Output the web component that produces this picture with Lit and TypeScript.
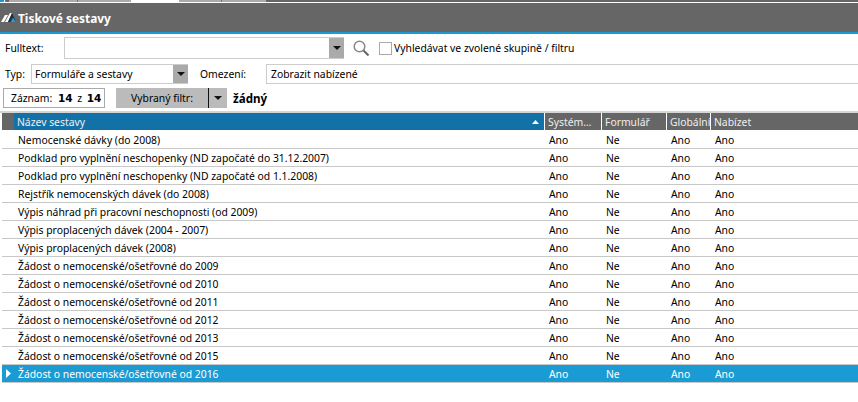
import { LitElement, html, css } from "lit";
import { customElement } from "lit/decorators.js";

const names = [
  "Nemocenské dávky (do 2008)",
  "Podklad pro vyplnění neschopenky (ND započaté do 31.12.2007)",
  "Podklad pro vyplnění neschopenky (ND započaté od 1.1.2008)",
  "Rejstřík nemocenských dávek (do 2008)",
  "Výpis náhrad při pracovní neschopnosti (od 2009)",
  "Výpis proplacených dávek (2004 - 2007)",
  "Výpis proplacených dávek (2008)",
  "Žádost o nemocenské/ošetřovné do 2009",
  "Žádost o nemocenské/ošetřovné od 2010",
  "Žádost o nemocenské/ošetřovné od 2011",
  "Žádost o nemocenské/ošetřovné od 2012",
  "Žádost o nemocenské/ošetřovné od 2013",
  "Žádost o nemocenské/ošetřovné od 2015",
  "Žádost o nemocenské/ošetřovné od 2016",
];

const strip: [number, string][] = [
  [4, "#1b9bd4"], [1, "#fff"], [1, "#1b9bd4"], [3, "#666"], [68, "#aaa"], [1, "#777"],
  [53, "#aaa"], [48, "#fff"], [42, "#aaa"], [1, "#777"], [44, "#aaa"],
];

const caret = html`<svg class="caret" width="8" height="4" viewBox="0 0 8 4"><path d="M0 0h8L4 4z" fill="#111"/></svg>`;

@customElement("app-root")
export class AppRoot extends LitElement {
  static styles = css`
    :host { display: block; width: 858px; height: 402px; background: #fff; overflow: hidden;
      font-family: "Noto Sans", Tahoma, sans-serif; font-size: 10.37px; color: #000; }
    .strip { height: 3px; box-sizing: border-box; display: flex; background: #666; border-bottom: 1px solid #fff; }
    .strip i { display: block; height: 2px; }
    .title { box-sizing: border-box; height: 31px; background: #666; border-bottom: 2px solid #1b9bd4;
      display: flex; align-items: center; color: #fff; font-weight: 700; font-size: 11.9px; padding-left: 1px; gap: 2px; }
    .form { display: flex; flex-direction: column; }
    .r1 { display: flex; align-items: center; height: 22px; padding-left: 5px; margin-top: 3px; }
    .r1 .lbl { width: 59px; }
    .input { border: 1px solid #ccc; border-width: 1px 0 1px 1px; box-sizing: border-box; background: #fff; display: flex; align-items: center; }
    .combo { width: 280px; height: 22px; justify-content: flex-end; }
    .btn { background: #aaa; align-self: stretch; width: 15px; display: flex; align-items: center; justify-content: center; }
    .search { margin-left: 9px; margin-right: 10px; display: block; flex: none; }
    .check { width: 13px; height: 13px; box-sizing: border-box; border: 1px solid #aaa; margin-right: 2px; flex: none; }
    .r2 { display: flex; align-items: center; height: 20px; margin-top: 5px; padding-left: 5px; }
    .typ { width: 26px; }
    .tcombo { width: 157px; height: 20px; padding-left: 3px; justify-content: space-between; }
    .om { margin-left: 12px; width: 66px; }
    .ofield { flex: 1; height: 20px; padding-left: 4px; }
    .r3 { display: flex; align-items: center; height: 20px; margin-top: 4px; padding-left: 3px; }
    .count { width: 102px; height: 20px; box-sizing: border-box; border: 1px solid #aaa; padding-left: 7px; display: flex; align-items: center; }
    .count .lab { width: 47px; }
    .count b { font-family: "DejaVu Sans", sans-serif; font-size: 10.5px; }
    .count .z { width: 14px; text-align: center; }
    .filter { margin-left: 11px; width: 92px; height: 20px; background: #bbb; display: flex; align-items: center; justify-content: center; }
    .fdrop { width: 19px; height: 20px; background: #bbb; border-left: 1px solid #111; box-sizing: border-box; display: flex; align-items: center; justify-content: center; }
    .none { margin-left: 6px; font-weight: 700; font-size: 11.6px; }
    .grid { margin-top: 3px; border-top: 2px solid #d4d4d4; padding-left: 2px; }
    .row, .head { display: grid; grid-template-columns: 12px 530px 57px 65px 44px 1fr; }
    .head { height: 17px; color: #eee; margin-bottom: 1px; }
    .head > div { background: #666; display: flex; align-items: center; padding-left: 3px; box-sizing: border-box; border-left: 1px solid #fff; white-space: nowrap; overflow: hidden; }
    .head > div:first-child { border-left: none; }
    .head .nm { background: #1272a8; justify-content: space-between; padding-right: 5px; border-left: none; }
    .row { height: 18px; box-sizing: border-box; border-bottom: 1px solid #c8c8c8; }
    .row > div { display: flex; align-items: center; padding-left: 5px; white-space: nowrap; color: #000; }
    .row > div:first-child { padding: 0; justify-content: center; }
    .row .nm { padding-left: 4px; }
    .row.sel { background: #1b9bd4; }
    .row.sel > div { color: #fff; }
  `;
  render() {
    return html`
      <div class="strip">
        ${strip.map(([w, c]) => html`<i style="width:${w}px;background:${c}"></i>`)}
      </div>
      <div class="title">
        <svg width="15" height="10" viewBox="0 0 15 10">
          <path d="M0 9L4 2h3L3 9z" fill="#fff"/>
          <path d="M4 9L9 0h2L7 9z" fill="#fff"/>
          <path d="M7 9l4-9 4 9z" fill="#1b2f45"/>
          <path d="M9.5 9l2.5-4.5L15 9z" fill="#1b9bd4"/>
        </svg>
        <span>Tiskové sestavy</span>
      </div>
      <div class="form">
        <div class="r1">
          <span class="lbl">Fulltext:</span>
          <div class="input combo"><span class="btn">${caret}</span></div>
          <svg class="search" width="16" height="16" viewBox="0 0 16 16" fill="none">
            <circle cx="6.5" cy="6.5" r="5.3" stroke="#888" stroke-width="1.5"/>
            <path d="M10.5 10.5l5 5" stroke="#666" stroke-width="2"/>
          </svg>
          <span class="check"></span>
          <span>Vyhledávat ve zvolené skupině / filtru</span>
        </div>
        <div class="r2">
          <span class="typ">Typ:</span>
          <div class="input tcombo"><span>Formuláře a sestavy</span><span class="btn">${caret}</span></div>
          <span class="om">Omezení:</span>
          <div class="input ofield">Zobrazit nabízené</div>
        </div>
        <div class="r3">
          <div class="count"><span class="lab">Záznam:</span><b>14</b><span class="z">z</span><b>14</b></div>
          <div class="filter">Vybraný filtr:</div>
          <div class="fdrop">${caret}</div>
          <span class="none">žádný</span>
        </div>
      </div>
      <div class="grid">
        <div class="head">
          <div></div>
          <div class="nm"><span>Název sestavy</span>
            <svg width="7" height="4" viewBox="0 0 7 4"><path d="M0 4h7L3.5 0z" fill="#fff"/></svg></div>
          <div>Systém…</div><div>Formulář</div><div>Globální</div><div>Nabízet</div>
        </div>
        ${names.map((n, i) => html`
          <div class="row ${i === names.length - 1 ? "sel" : ""}">
            <div>${i === names.length - 1 ? html`<svg width="5" height="9" viewBox="0 0 5 9"><path d="M0 0l5 4.5L0 9z" fill="#fff"/></svg>` : ""}</div>
            <div class="nm">${n}</div>
            <div>Ano</div><div>Ne</div><div>Ano</div><div>Ano</div>
          </div>`)}
      </div>
    `;
  }
}
